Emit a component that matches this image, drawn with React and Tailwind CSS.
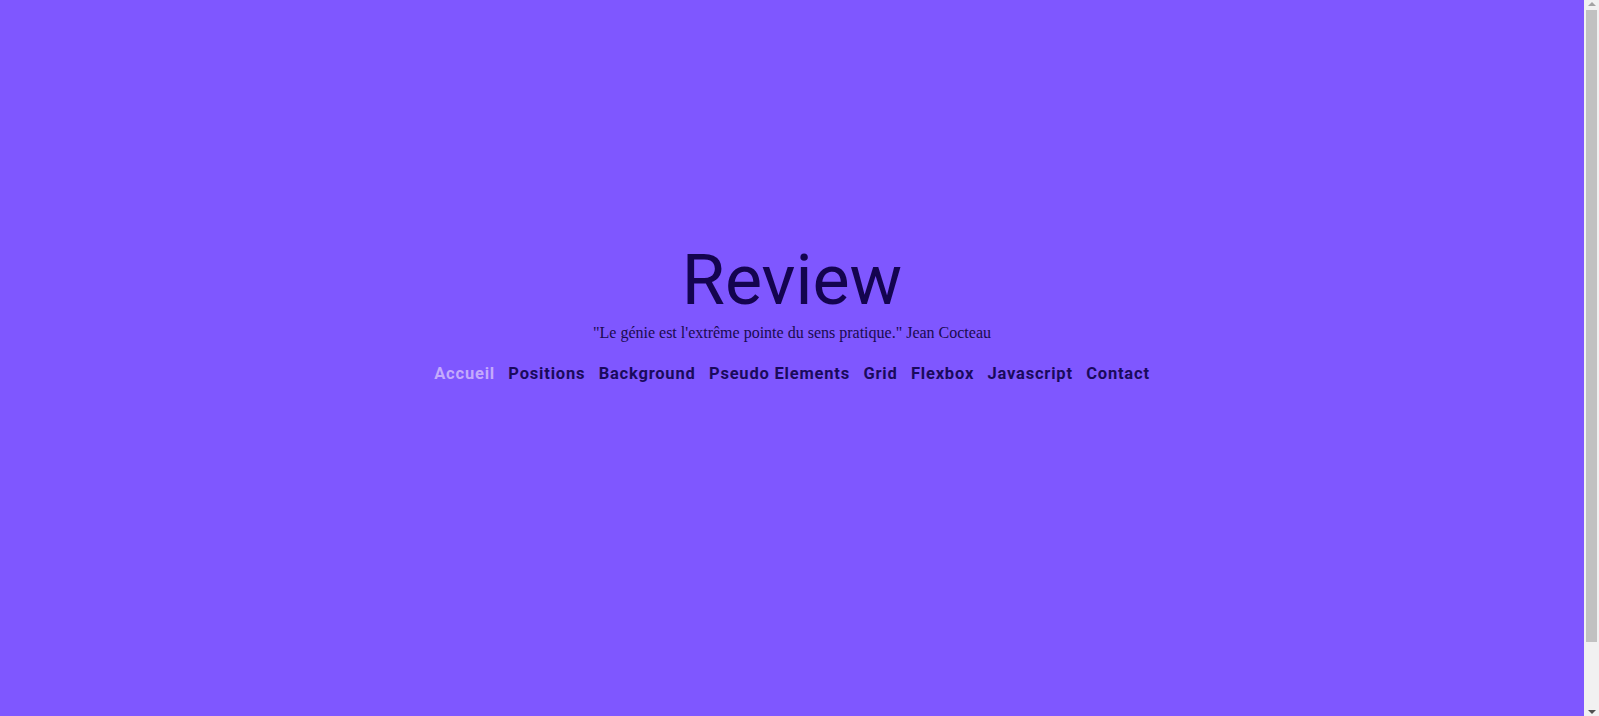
const links = [
  "Accueil",
  "Positions",
  "Background",
  "Pseudo Elements",
  "Grid",
  "Flexbox",
  "Javascript",
  "Contact",
];

function NavBar() {
  return (
    <nav className="mt-[17px]">
      <ul className="flex items-center gap-[13.4px]">
        {links.map((link, index) => (
          <li key={link}>
            <a
              href="#"
              className={
                index === 0
                  ? "text-[16.5px] font-bold tracking-[0.8px] leading-6 text-[#c4aafc]"
                  : "text-[16.5px] font-bold tracking-[0.8px] leading-6 text-[#1a0a5c]"
              }
            >
              {link}
            </a>
          </li>
        ))}
      </ul>
    </nav>
  );
}

// fake window scrollbar (the screenshot shows the page overflowing)
function ScrollBar() {
  return (
    <aside className="flex w-[15px] flex-none flex-col items-center bg-[#f1f1f1] pt-[2px] pb-[2px]">
      <div className="h-0 w-0 border-x-[4px] border-b-[4px] border-x-transparent border-b-[#a3a3a3]" />
      <div className="mt-[4px] h-[632px] w-[11px] bg-[#c1c1c1]" />
      <div className="flex-1" />
      <div className="h-0 w-0 border-x-[4px] border-t-[4px] border-x-transparent border-t-[#505050]" />
    </aside>
  );
}

export default function App() {
  return (
    <div className="flex h-[716px] overflow-hidden font-['Roboto',sans-serif]">
      <main className="flex-1 bg-[#7f57ff]">
        <header className="flex flex-col items-center pt-[245px]">
          <h1 className="text-[70px] leading-none font-normal text-[#14044f]">
            Review
          </h1>
          <p className="mt-[6px] font-['Liberation_Serif',serif] text-[16px] leading-6 text-[#1a0a4f]">
            "Le génie est l'extrême pointe du sens pratique." Jean Cocteau
          </p>
          <NavBar />
        </header>
      </main>
      <ScrollBar />
    </div>
  );
}
